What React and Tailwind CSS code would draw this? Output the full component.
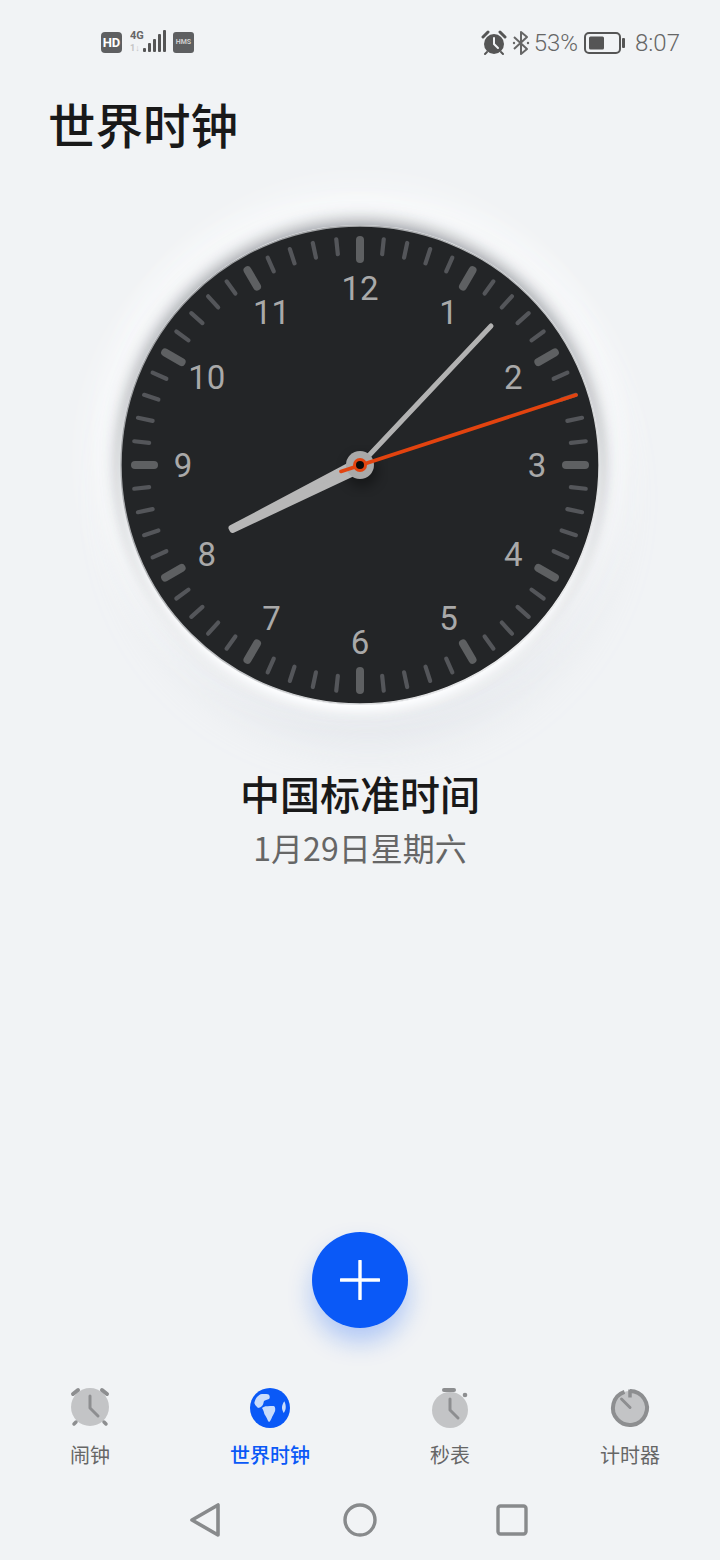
const CJK = { fontFamily: '"Noto Sans CJK SC", "Noto Sans", sans-serif' };

function StatusBar() {
  return (
    <div className="flex h-[84px] items-center justify-between pl-[101px] pr-[40px]" style={{ fontFamily: 'Roboto, sans-serif' }}>
      <div className="flex items-center">
        <div className="flex h-[21px] w-[21px] items-center justify-center rounded-[4px] bg-[#5e5f61] text-[13px] font-bold leading-none text-white">HD</div>
        <svg width="38" height="24" viewBox="0 0 38 24" className="ml-[8px]">
          <text x="0" y="9" fontSize="11" fontWeight="700" fill="#666" fontFamily="Roboto">4G</text>
          <text x="0" y="21" fontSize="9" fontWeight="700" fill="#c4c4c4" fontFamily="Roboto">1↓</text>
          <rect x="13" y="18" width="3" height="4" rx="1" fill="#555" />
          <rect x="18" y="13" width="3" height="9" rx="1" fill="#555" />
          <rect x="23" y="9" width="3" height="13" rx="1" fill="#555" />
          <rect x="28" y="4" width="3" height="18" rx="1" fill="#555" />
          <rect x="33" y="0" width="3" height="22" rx="1" fill="#555" />
        </svg>
        <div className="ml-[5px] flex h-[21px] w-[21px] items-center justify-center rounded-[3px] bg-[#5e5f61] text-[7px] font-bold leading-none text-[#cfcfcf]">HMS</div>
      </div>
      <div className="flex items-center pt-[1px] text-[24px] leading-none text-[#666] font-light">
        <svg width="26" height="26" viewBox="0 0 26 26">
          <circle cx="13" cy="14" r="10" fill="#555" />
          <path d="M13 8v6l4 4" stroke="#f1f3f5" strokeWidth="2" fill="none" strokeLinecap="round" />
          <path d="M2 7l5-5M24 7l-5-5" stroke="#555" strokeWidth="3" strokeLinecap="round" />
          <path d="M6 22l-2 2M20 22l2 2" stroke="#555" strokeWidth="2" strokeLinecap="round" />
        </svg>
        <svg width="18" height="26" viewBox="0 0 18 26" className="ml-[5px]">
          <path d="M2 7l13 12-6 5V2l6 5L2 19" stroke="#666" strokeWidth="2" fill="none" strokeLinejoin="round" />
          <circle cx="2" cy="13" r="1.2" fill="#666" />
          <circle cx="16" cy="13" r="1.2" fill="#666" />
        </svg>
        <span className="ml-[4px]">53%</span>
        <svg width="41" height="22" viewBox="0 0 41 22" className="ml-[6px]">
          <rect x="1" y="1" width="35" height="20" rx="4" fill="none" stroke="#555" strokeWidth="2" />
          <rect x="5" y="4.5" width="15" height="13" rx="1.5" fill="#555" />
          <rect x="38" y="6" width="3" height="10" rx="1" fill="#555" />
        </svg>
        <span className="ml-[10px]">8:07</span>
      </div>
    </div>
  );
}

const NUMS = [12, 1, 2, 3, 4, 5, 6, 7, 8, 9, 10, 11];

function ClockFace() {
  const ticks = Array.from({ length: 60 }, (_, i) => i);
  return (
    <svg width="480" height="480" viewBox="-240 -240 480 480" className="block">
      <defs>
        <linearGradient id="rim" x1="0" y1="0" x2="1" y2="1">
          <stop offset="0" stopColor="#8f9194" />
          <stop offset="0.6" stopColor="#c4c6c8" />
          <stop offset="1" stopColor="#ffffff" />
        </linearGradient>
        <filter id="hs" x="-30%" y="-30%" width="160%" height="160%">
          <feGaussianBlur stdDeviation="6" />
        </filter>
      </defs>
      <circle r="239" fill="#232527" stroke="url(#rim)" strokeWidth="1.4" />
      {ticks.map((i) =>
        i % 5 === 0 ? (
          <line key={i} x1="0" y1={-225} x2="0" y2={-206} stroke="#5e6062" strokeWidth="8" strokeLinecap="round" transform={`rotate(${i * 6})`} />
        ) : (
          <line key={i} x1="0" y1={-227} x2="0" y2={-212} stroke="#54565a" strokeWidth="4.2" strokeLinecap="round" transform={`rotate(${i * 6})`} />
        )
      )}
      {NUMS.map((n, i) => {
        const a = (i * 30 * Math.PI) / 180;
        return (
          <text key={n} x={177 * Math.sin(a)} y={-177 * Math.cos(a) + 12} textAnchor="middle" fontSize="33" fill="#a9a9a9" fontFamily="Roboto, sans-serif">
            {n}
          </text>
        );
      })}
      <circle cx="2" cy="6" r="16" fill="#000" opacity="0.35" filter="url(#hs)" />
      <path d="M-128.500 63 L-127.500 65 L2 4 L-2 -4 Z" fill="#b7b7b7" stroke="#b7b7b7" strokeWidth="6" strokeLinejoin="round" />
      <line x1="131" y1="-139" x2="0" y2="0" stroke="#b2b2b2" strokeWidth="5" strokeLinecap="round" />
      <circle r="14" fill="#a9a9a9" />
      <line x1="-19" y1="6.5" x2="216" y2="-70" stroke="#e2430f" strokeWidth="3.6" strokeLinecap="round" />
      <circle r="7" fill="#e2430f" />
      <circle r="4" fill="#0a0a0a" />
    </svg>
  );
}

function AlarmIcon() {
  return (
    <svg width="44" height="44" viewBox="0 0 44 44">
      <circle cx="22" cy="21" r="19" fill="#c3c4c6" />
      <path d="M5 8l5-4M39 8l-5-4" stroke="#8d8e90" strokeWidth="4" strokeLinecap="round" />
      <path d="M6 38l2-2M38 38l-2-2" stroke="#8d8e90" strokeWidth="3.5" strokeLinecap="round" />
      <path d="M22 10v12l8 8" stroke="#8d8e90" strokeWidth="3" fill="none" strokeLinecap="round" strokeLinejoin="round" />
    </svg>
  );
}

function GlobeIcon() {
  return (
    <svg width="44" height="44" viewBox="0 0 44 44">
      <circle cx="22" cy="22" r="20" fill="#0a59f7" />
      <path d="M6.300 17C7 14 8 12 9 11c1.500-1.500 3-3 5-3 3 0 6 0 7 .7 1 1.500 1 3.300 0 4.300-2 1-4 1-5 2-.7 2-.7 4-2 5-1 1-3 2-4 2-1.500-1.500-3-3-3.700-5z" fill="#c9dcfb" />
      <path d="M14 22c2-1.500 3.500-2 5.700-1.700 2.300 0 5.300-.5 6.600 0 1 1 1.200 3.500.7 5-1 2.500-2.700 5-3.300 6.700-.7 1.500-1.700 4-2.700 4-1-1-1.700-2.500-2.300-4-.5-1.500-2-3-2.400-4.300-.3-1.700-1-3.500-2.300-5.700z" fill="#c9dcfb" />
      <path d="M36.300 15.300c1 2 1.700 4.500 1.400 6.700-.2 2-1 3.700-2 5-1-2-1.900-4-1.700-6 .2-2 1.200-4.200 2.300-5.700z" fill="#c9dcfb" />
    </svg>
  );
}

function StopwatchIcon() {
  return (
    <svg width="44" height="44" viewBox="0 0 44 44">
      <circle cx="22" cy="24" r="18" fill="#c3c4c6" />
      <path d="M16 4h10" stroke="#8d8e90" strokeWidth="4" strokeLinecap="round" />
      <circle cx="37" cy="9" r="2.3" fill="#8d8e90" />
      <path d="M22 13v11l8 8" stroke="#8d8e90" strokeWidth="3" fill="none" strokeLinecap="round" strokeLinejoin="round" />
    </svg>
  );
}

function TimerIcon() {
  return (
    <svg width="44" height="44" viewBox="0 0 44 44">
      <circle cx="22" cy="22" r="17" fill="#c3c4c6" />
      <path d="M22 5A17 17 0 1 1 16.500 5.900" fill="none" stroke="#8d8e90" strokeWidth="4" />
      <path d="M22 3.500v8" stroke="#8d8e90" strokeWidth="3.500" />
      <path d="M13.500 13l8.500 8.500" stroke="#8d8e90" strokeWidth="3" strokeLinecap="round" />
    </svg>
  );
}

function Tab({ icon, label, active }) {
  return (
    <div className="flex flex-col items-center">
      {icon}
      <span className={`mt-[10px] text-[20px] leading-[30px] ${active ? 'text-[#0a59f7] font-medium' : 'text-[#666666]'}`} style={CJK}>{label}</span>
    </div>
  );
}

export default function App() {
  return (
    <div className="flex h-[1560px] w-[720px] flex-col overflow-hidden bg-[#f1f3f5]" style={CJK}>
      <StatusBar />
      <h1 className="pl-[48px] text-[47.5px] font-medium leading-[80px] text-[#191919]" style={CJK}>世界时钟</h1>
      <div className="mt-[61px] flex justify-center">
        <div className="h-[480px] w-[480px] rounded-full shadow-[0_9px_10px_#fdfeff,0_-3px_18px_rgba(70,75,85,0.6),0_-24px_46px_#fbfcfd,-20px_-6px_40px_#fafbfc,20px_-6px_40px_#fafbfc,8px_34px_46px_rgba(205,211,220,0.4)]">
          <ClockFace />
        </div>
      </div>
      <div className="mt-[64px] text-center text-[40px] font-medium leading-[48px] text-[#191919]">中国标准时间</div>
      <div className="mt-[8px] text-center text-[32px] leading-[44px] text-[#666666]">1月29日星期六</div>
      <div className="mt-[363px] flex justify-center">
        <div className="flex h-[96px] w-[96px] items-center justify-center rounded-full bg-[#0a59f7] shadow-[0_14px_24px_rgba(10,89,247,0.28)]">
          <svg width="40" height="40" viewBox="0 0 40 40">
            <path d="M20 1v38M1 20h38" stroke="#fff" strokeWidth="3.4" strokeLinecap="round" />
          </svg>
        </div>
      </div>
      <div className="mt-[58px] grid grid-cols-4">
        <Tab icon={<AlarmIcon />} label="闹钟" />
        <Tab icon={<GlobeIcon />} label="世界时钟" active />
        <Tab icon={<StopwatchIcon />} label="秒表" />
        <Tab icon={<TimerIcon />} label="计时器" />
      </div>
      <div className="ml-[189px] mt-[32px] flex items-center">
        <svg width="32" height="36" viewBox="0 0 32 36">
          <path d="M3 18L29 3v30z" fill="none" stroke="#888a8c" strokeWidth="3.6" strokeLinejoin="round" />
        </svg>
        <svg width="34" height="34" viewBox="0 0 34 34" className="ml-[122px]">
          <circle cx="17" cy="17" r="15" fill="none" stroke="#888a8c" strokeWidth="3.4" />
        </svg>
        <svg width="32" height="32" viewBox="0 0 32 32" className="ml-[119px]">
          <rect x="2" y="2" width="28" height="28" rx="2.5" fill="none" stroke="#888a8c" strokeWidth="3.4" />
        </svg>
      </div>
    </div>
  );
}
